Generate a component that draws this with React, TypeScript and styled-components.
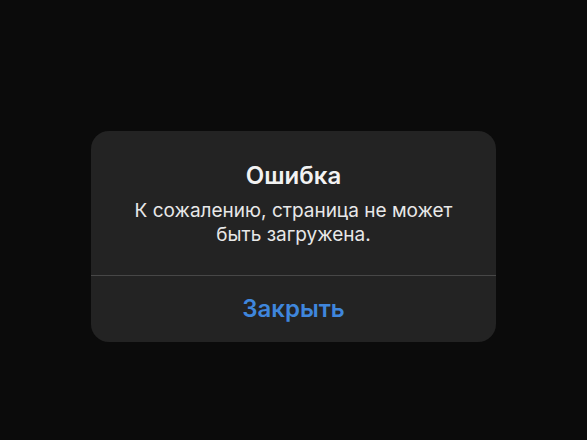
import React from "react";
import styled, { createGlobalStyle } from "styled-components";

const Global = createGlobalStyle`
  html, body { margin: 0; padding: 0; background: #0b0b0b; }
  body { font-family: Inter, "Noto Sans", sans-serif; -webkit-font-smoothing: antialiased; }
`;

const Screen = styled.div`
  width: 587px;
  height: 440px;
  background: #0b0b0b;
  display: flex;
  justify-content: center;
  padding-top: 131px;
  box-sizing: border-box;
`;

const Card = styled.div`
  width: 405px;
  height: 211px;
  background: #232323;
  border-radius: 18px;
  display: flex;
  flex-direction: column;
  overflow: hidden;
`;

const Body = styled.div`
  height: 144px;
  box-sizing: border-box;
  padding-top: 30px;
  display: flex;
  flex-direction: column;
  align-items: center;
  text-align: center;
`;

const Title = styled.div`
  color: #f2f2f2;
  font-size: 24px;
  font-weight: 600;
  line-height: 30px;
`;

const Message = styled.div`
  margin-top: 8px;
  color: #e8e8e8;
  font-size: 19px;
  font-weight: 400;
  line-height: 24px;
  width: 360px;
`;

const Divider = styled.div`
  height: 1px;
  background: #474747;
`;

const Action = styled.button`
  flex: 1;
  border: none;
  background: transparent;
  color: #3f86dc;
  font-family: inherit;
  font-size: 24px;
  font-weight: 600;
  padding: 0 0 2px;
  cursor: pointer;
`;

export default function App() {
  return (
    <>
      <Global />
      <Screen>
        <Card>
          <Body>
            <Title>Ошибка</Title>
            <Message>К сожалению, страница не может быть загружена.</Message>
          </Body>
          <Divider />
          <Action>Закрыть</Action>
        </Card>
      </Screen>
    </>
  );
}
